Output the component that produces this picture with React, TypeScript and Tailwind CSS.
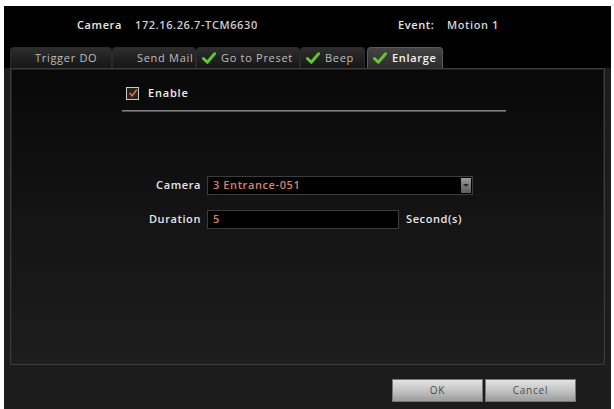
import React from 'react'

const font = { fontFamily: '"Open Sans", "Liberation Sans", sans-serif' }

function Check({ show }: { show: boolean }) {
  return (
    <span className="inline-flex h-[14px] w-[15px] shrink-0 items-center justify-center">
      {show && (
        <svg viewBox="0 0 16 14" className="h-[12px] w-[14px]">
          <path d="M1.5 7.5 L6 12 L14.5 2" fill="none" stroke="#62c532" strokeWidth={3.4} strokeLinecap="round" strokeLinejoin="round" />
        </svg>
      )}
    </span>
  )
}

interface Tab {
  label: string
  checked: boolean
  width: string
  active?: boolean
}

const tabs: Tab[] = [
  { label: 'Trigger DO', checked: false, width: 'w-[102px]' },
  { label: 'Send Mail', checked: false, width: 'w-[84px]' },
  { label: 'Go to Preset', checked: true, width: 'w-[104px]' },
  { label: 'Beep', checked: true, width: 'w-[65px]' },
  { label: 'Enlarge', checked: true, width: 'w-[76px]', active: true },
]

export default function App() {
  return (
    <div className="h-[409px] w-[614px] overflow-hidden bg-white pl-[4px] pr-[3px] pt-[6px]" style={font}>
      <div className="flex h-full flex-col bg-[#1c1c1c]">
        {/* Header */}
        <div className="flex h-[36px] items-center bg-black pl-[73px] pt-[3px] text-[11px] font-semibold tracking-[0.6px]">
          <span className="w-[58px] text-[#e6e6e6]">Camera</span>
          <span className="w-[263px] text-[#cfcfcf]">172.16.26.7-TCM6630</span>
          <span className="w-[49px] text-[#e6e6e6]">Event:</span>
          <span className="text-[#d4d4d4]">Motion 1</span>
        </div>

        {/* Tabs */}
        <div className="flex h-[26px] items-end bg-black pl-[6px]">
          {tabs.map(t => (
            <div
              key={t.label}
              className={`flex h-[21px] items-center gap-[5px] rounded-t-[4px] border border-b-0 pl-[4px] text-[11px] tracking-[0.7px] ${t.width} ${
                t.active
                  ? 'ml-[2px] border-[#5a5a5a] bg-gradient-to-b from-[#444] to-[#2c2c2c] font-semibold text-[#f2f2f2]'
                  : 'border-[#2a2a2a] bg-gradient-to-b from-[#2e2e2e] to-[#161616] text-[#bdbdbd]'
              }`}
            >
              <Check show={t.checked} />
              <span className="whitespace-nowrap">{t.label}</span>
            </div>
          ))}
        </div>

        {/* Panel */}
        <div className="mx-[6px] flex h-[297px] flex-col border border-[#3a3a3a] bg-gradient-to-b from-[#080808] via-[#141414] to-[#1d1d1d] shadow-[inset_0_0_0_1px_#222]">
          <div className="ml-[115px] mt-[16px] flex items-center gap-[9px]">
            <span className="flex h-[13px] w-[13px] items-center justify-center border border-[#c9c9c9] bg-[#2a2120]">
              <svg viewBox="0 0 12 12" className="h-[10px] w-[10px]">
                <path d="M2 6 L5 9.5 L10.5 2" fill="none" stroke="#d9834f" strokeWidth={1.8} />
              </svg>
            </span>
            <span className="text-[11px] font-semibold tracking-[0.8px] text-[#ececec]">Enable</span>
          </div>
          <div className="ml-[111px] mt-[8px] h-[2px] w-[384px] bg-gradient-to-b from-[#9a9a9a] to-[#3a3a3a]" />

          <div className="mt-[64px] flex flex-col gap-[15px] text-[11px] font-semibold tracking-[0.6px]">
            <div className="flex items-center">
              <span className="w-[196px] pr-[6px] text-right text-[#e6e6e6]">Camera</span>
              <div className="flex h-[19px] w-[266px] items-center justify-between border border-[#3c3c3c] bg-black pl-[5px] pr-[1px]">
                <span className="text-[#d8826a]">3 Entrance-051</span>
                <span className="flex h-[15px] w-[10px] items-center justify-center bg-gradient-to-b from-[#9a9a9a] to-[#5c5c5c]">
                  <span className="h-0 w-0 border-x-[3px] border-t-[3px] border-x-transparent border-t-[#2a2a2a]" />
                </span>
              </div>
            </div>
            <div className="flex items-center">
              <span className="w-[196px] pr-[6px] text-right text-[#e6e6e6]">Duration</span>
              <div className="flex h-[19px] w-[192px] items-center border border-[#3c3c3c] bg-black pl-[5px]">
                <span className="text-[#d8826a]">5</span>
              </div>
              <span className="ml-[7px] text-[#e6e6e6]">Second(s)</span>
            </div>
          </div>
        </div>

        {/* Footer */}
        <div className="flex flex-1 justify-end gap-[2px] pr-[35px] pt-[14px]">
          {['OK', 'Cancel'].map(b => (
            <button
              key={b}
              type="button"
              className="h-[23px] w-[91px] border border-[#777] bg-gradient-to-b from-[#e4e4e4] via-[#c4c4c4] to-[#9c9c9c] text-[10px] tracking-[0.8px] text-[#4a4a4a]"
            >
              {b}
            </button>
          ))}
        </div>
      </div>
    </div>
  )
}
